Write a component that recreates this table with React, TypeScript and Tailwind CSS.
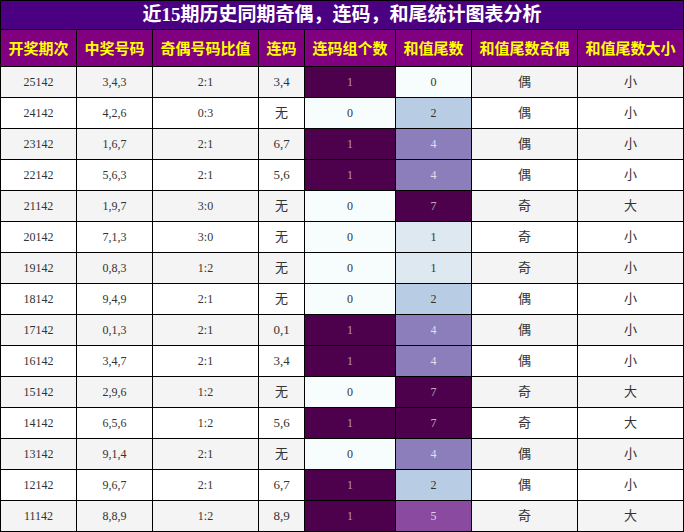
const rows: [string, string, string, string, number, number, string, string][] = [
  ['25142', '3,4,3', '2:1', '3,4', 1, 0, '偶', '小'],
  ['24142', '4,2,6', '0:3', '无', 0, 2, '偶', '小'],
  ['23142', '1,6,7', '2:1', '6,7', 1, 4, '偶', '小'],
  ['22142', '5,6,3', '2:1', '5,6', 1, 4, '偶', '小'],
  ['21142', '1,9,7', '3:0', '无', 0, 7, '奇', '大'],
  ['20142', '7,1,3', '3:0', '无', 0, 1, '奇', '小'],
  ['19142', '0,8,3', '1:2', '无', 0, 1, '奇', '小'],
  ['18142', '9,4,9', '2:1', '无', 0, 2, '偶', '小'],
  ['17142', '0,1,3', '2:1', '0,1', 1, 4, '偶', '小'],
  ['16142', '3,4,7', '2:1', '3,4', 1, 4, '偶', '小'],
  ['15142', '2,9,6', '1:2', '无', 0, 7, '奇', '大'],
  ['14142', '6,5,6', '1:2', '5,6', 1, 7, '奇', '大'],
  ['13142', '9,1,4', '2:1', '无', 0, 4, '偶', '小'],
  ['12142', '9,6,7', '2:1', '6,7', 1, 2, '偶', '小'],
  ['11142', '8,8,9', '1:2', '8,9', 1, 5, '奇', '大'],
];

const headers = ['开奖期次', '中奖号码', '奇偶号码比值', '连码', '连码组个数', '和值尾数', '和值尾数奇偶', '和值尾数大小'];

// BuPu-like scale for 和值尾数
const tailColor: Record<number, string> = {
  0: 'bg-[#f7fcfd] text-[#333]',
  1: 'bg-[#dde8f1] text-[#333]',
  2: 'bg-[#b8cde3] text-[#333]',
  4: 'bg-[#8c7dbb] text-white/75',
  5: 'bg-[#8a4aa0] text-white/75',
  7: 'bg-[#4d004b] text-white/65',
};

const Cell = ({ children, className = '' }: { children: React.ReactNode; className?: string }) => (
  <div className={`flex items-center justify-center h-[30px] text-[12px] ${className}`}>{children}</div>
);

export default function App() {
  return (
    <div className="w-[684px] h-[532px] bg-white">
      <div
        className="grid grid-cols-[75px_75px_105px_45px_90px_75px_105px_105px] gap-px bg-black p-px"
        style={{ fontFamily: '"Liberation Serif", "Noto Sans CJK SC", serif' }}
      >
        {/* title */}
        <div className="col-span-8 h-[28px] bg-[#4b0082] flex items-center justify-center text-white font-bold text-[19px]">
          近15期历史同期奇偶，连码，和尾统计图表分析
        </div>

        {/* header */}
        {headers.map((h) => (
          <div
            key={h}
            className="h-[36px] bg-[#800080] flex items-center justify-center text-[#ffff00] font-bold text-[15px]"
            style={{ fontFamily: '"Noto Sans CJK SC", sans-serif' }}
          >
            {h}
          </div>
        ))}

        {/* body */}
        {rows.map((r, i) => {
          const bg = i % 2 === 0 ? 'bg-[#f4f4f4]' : 'bg-white';
          return [
            <Cell key={`${i}a`} className={`${bg} text-[#333]`}>{r[0]}</Cell>,
            <Cell key={`${i}b`} className={`${bg} text-[#333]`}>{r[1]}</Cell>,
            <Cell key={`${i}c`} className={`${bg} text-[#333]`}>{r[2]}</Cell>,
            <Cell key={`${i}d`} className={`${bg} text-[#333] text-[13px]`}>{r[3]}</Cell>,
            <Cell
              key={`${i}e`}
              className={r[4] === 1 ? 'bg-[#4d004b] text-white/60' : 'bg-[#f7fcfd] text-[#333]'}
            >
              {r[4]}
            </Cell>,
            <Cell key={`${i}f`} className={tailColor[r[5]]}>{r[5]}</Cell>,
            <Cell key={`${i}g`} className={`${bg} text-[#333] text-[13px]`}>{r[6]}</Cell>,
            <Cell key={`${i}h`} className={`${bg} text-[#333] text-[13px]`}>{r[7]}</Cell>,
          ];
        })}
      </div>
    </div>
  );
}
